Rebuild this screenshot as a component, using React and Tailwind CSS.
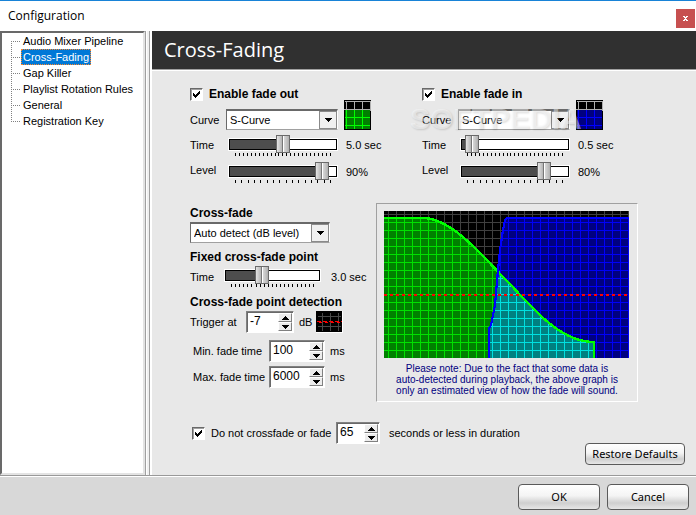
import { useId, useState } from "react";

const PAGES = [
  "Audio Mixer Pipeline",
  "Cross-Fading",
  "Gap Killer",
  "Playlist Rotation Rules",
  "General",
  "Registration Key",
];

const FADE_OUT = "M0 7 H41 C70 9 100 47 126 73 C156 106 180 131 210 131 V147";
const FADE_IN = "M105 147 V118 L107 114 L111 94 L114 59 L116 39 L119 19 L121 9 L123 7 H245";

const HEADING = "text-[12px] font-bold whitespace-nowrap";

function Check({ children, bold }) {
  const [on, setOn] = useState(true);
  return (
    <label className={`flex h-3 items-center gap-1.5 whitespace-nowrap ${bold ? HEADING : ""}`}>
      <span className="grid">
        <input
          type="checkbox"
          checked={on}
          onChange={() => setOn(!on)}
          className="[grid-area:1/1] size-[13px] appearance-none border border-[#696969] border-r-white border-b-white bg-white shadow-[inset_1px_1px_0_#a0a0a0]"
        />
        {on && (
          <svg className="pointer-events-none [grid-area:1/1] size-[13px]" viewBox="0 0 13 13" shapeRendering="crispEdges">
            <path d="M3 5h1v1h1v1h1v-1h1v-1h1v-1h1v-1h1v3h-1v1h-1v1h-1v1h-1v1h-1v-1h-1v-1h-1z" />
          </svg>
        )}
      </span>
      {children}
    </label>
  );
}

function Select({ id, label, options }) {
  return (
    <span className="grid w-full">
      <select
        id={id}
        aria-label={label}
        className="[grid-area:1/1] h-[21px] w-full appearance-none border border-t-2 border-[#696969] border-r-white border-b-[#a0a0a0] bg-white pl-[3px] outline-none"
      >
        {options.map((o) => (
          <option key={o}>{o}</option>
        ))}
      </select>
      <span className="pointer-events-none m-px mt-0.5 flex h-[18px] w-[18px] items-center justify-center self-start justify-self-end border border-[#8a8a8a] bg-[#f0f0f0] [grid-area:1/1]">
        <svg width="7" height="4" viewBox="0 0 7 4" shapeRendering="crispEdges">
          <path d="M0 0h7v1h-1v1h-1v1h-1v1h-1v-1h-1v-1h-1v-1h-1z" />
        </svg>
      </span>
    </span>
  );
}

function Slider({ id, initial, ticks }) {
  const [value, setValue] = useState(initial);
  return (
    <div className="w-full">
      <input
        id={id}
        type="range"
        value={value}
        onChange={(e) => setValue(Number(e.target.value))}
        style={{ "--fill": `${value}%` }}
        className="block h-[18px] w-full appearance-none bg-transparent [&::-webkit-slider-runnable-track]:h-[11px] [&::-webkit-slider-runnable-track]:border [&::-webkit-slider-runnable-track]:border-black [&::-webkit-slider-runnable-track]:bg-[linear-gradient(to_right,#4d4d4d_var(--fill),#fff_var(--fill))] [&::-webkit-slider-runnable-track]:shadow-[0_0_0_1px_#fff] [&::-webkit-slider-thumb]:-mt-[5px] [&::-webkit-slider-thumb]:h-[18px] [&::-webkit-slider-thumb]:w-[14px] [&::-webkit-slider-thumb]:appearance-none [&::-webkit-slider-thumb]:border [&::-webkit-slider-thumb]:border-[#6a6a6a] [&::-webkit-slider-thumb]:bg-[linear-gradient(to_right,#e4e4e4,#b4b4b4_5px,#777_5px,#777_6px,#fff_6px,#fff_7px,#d8d8d8_7px,#b0b0b0)]"
      />
      <div className="flex h-[3px] justify-between px-1.5">
        {Array.from({ length: ticks }, (_, i) => (
          <span key={i} className="w-px bg-black" />
        ))}
      </div>
    </div>
  );
}

function Spinner({ id, label, initial }) {
  const [value, setValue] = useState(initial);
  const button =
    "flex h-[9px] w-[14px] items-center justify-center border border-white border-r-[#808080] border-b-[#808080] bg-[#ececec]";
  return (
    <span className="flex h-[22px] w-full border border-[#808080] border-r-white border-b-white bg-white p-px shadow-[inset_1px_1px_0_#696969]">
      <input
        id={id}
        aria-label={label}
        value={value}
        onChange={(e) => setValue(e.target.value)}
        className="h-4 w-full min-w-0 bg-transparent pl-0.5 text-[12px] outline-none"
      />
      <span className="flex flex-col">
        <button type="button" aria-label="Increase" className={button} onClick={() => setValue(Number(value) + 1)}>
          <svg width="7" height="4" viewBox="0 0 7 4" shapeRendering="crispEdges">
            <path d="M3 0h1v1h1v1h1v1h1v1h-7v-1h1v-1h1v-1h1z" />
          </svg>
        </button>
        <button type="button" aria-label="Decrease" className={button} onClick={() => setValue(Number(value) - 1)}>
          <svg width="7" height="4" viewBox="0 0 7 4" shapeRendering="crispEdges">
            <path d="M0 0h7v1h-1v1h-1v1h-1v1h-1v-1h-1v-1h-1v-1h-1z" />
          </svg>
        </button>
      </span>
    </span>
  );
}

function CurveSwatch({ fill, line }) {
  return (
    <svg width="27" height="30" viewBox="0 0 27 30" shapeRendering="crispEdges" className="shrink-0">
      <rect width="27" height="30" />
      <path d="M2 0V10M10 0V10M18 0V10M26 0V10M0 1H27" transform="translate(.5 .5)" stroke="#b0b0b0" />
      <rect x="1" y="10" width="25" height="19" fill={fill} />
      <path d="M2.5 10V29M10.5 10V29M18.5 10V29M1 17.5H26M1 25.5H26" stroke={line} />
      <path d="M0 9.5H27" stroke="#b0b0b0" />
    </svg>
  );
}

function LevelSwatch() {
  return (
    <svg width="27" height="22" viewBox="0 0 27 22" shapeRendering="crispEdges" className="shrink-0">
      <rect width="27" height="22" fill="#fff" />
      <rect width="26" height="21" />
      <path d="M6.5 2V20M14.5 2V20M22.5 2V20M2 5.5H25M2 15.5H25" stroke="#484848" />
      <path d="M1 10.5H26" stroke="#f00" strokeDasharray="4 2" />
      <path d="M3 11.5H26" stroke="#f00" strokeDasharray="3 3" />
    </svg>
  );
}

function FadeGroup({ title, time, timeText, level, levelText, fill, line }) {
  const id = useId();
  return (
    <section className="w-[232px]">
      <Check bold>{title}</Check>
      <div className="flex h-[30px] items-end">
        <label htmlFor={`${id}c`} className="w-9 shrink-0 leading-5">Curve</label>
        <div className="w-[112px]">
          <Select id={`${id}c`} options={["S-Curve", "Linear", "Logarithmic"]} />
        </div>
        <div className="ml-1.5">
          <CurveSwatch fill={fill} line={line} />
        </div>
      </div>
      <div className="mt-[5px] flex">
        <label htmlFor={`${id}t`} className="w-[39px] shrink-0 leading-5">Time</label>
        <div className="w-[108px]">
          <Slider id={`${id}t`} initial={time} ticks={25} />
        </div>
        <span className="ml-[9px] leading-5">{timeText}</span>
      </div>
      <div className="mt-1.5 flex">
        <label htmlFor={`${id}l`} className="w-[39px] shrink-0 leading-4">Level</label>
        <div className="w-[108px]">
          <Slider id={`${id}l`} initial={level} ticks={16} />
        </div>
        <span className="ml-[9px] leading-5">{levelText}</span>
      </div>
    </section>
  );
}

function FadeGraph() {
  const grid = (id, bg, line) => (
    <pattern id={id} width="8" height="8" patternUnits="userSpaceOnUse">
      <rect width="8" height="8" fill={bg} />
      <path d="M4.5 0V8M0 3.5H8" stroke={line} />
    </pattern>
  );
  return (
    <svg viewBox="0 0 245 147" className="block h-[147px] w-[245px]" shapeRendering="crispEdges" role="img" aria-label="Cross-fade graph">
      <defs>
        {grid("gridBlack", "#000", "#404040")}
        {grid("gridGreen", "#008000", "#00e000")}
        {grid("gridBlue", "#000080", "#0000f8")}
        {grid("gridTeal", "#008080", "#00e0e0")}
        <clipPath id="fadeInArea">
          <path d={`${FADE_IN} V147 Z`} />
        </clipPath>
      </defs>
      <rect width="245" height="147" fill="url(#gridBlack)" />
      <path d={`${FADE_OUT} H0 Z`} fill="url(#gridGreen)" />
      <path d={`${FADE_IN} V147 Z`} fill="url(#gridBlue)" />
      <path d={`${FADE_OUT} H0 Z`} fill="url(#gridTeal)" clipPath="url(#fadeInArea)" />
      <path d={FADE_OUT} fill="none" stroke="#00ff00" strokeWidth="2.4" />
      <path d={FADE_IN} fill="none" stroke="#0000ff" strokeWidth="2.2" />
      <path d="M0 84H245" stroke="#ff0000" strokeWidth="2" strokeDasharray="3 3" />
    </svg>
  );
}

function PushButton({ children, className }) {
  return (
    <button
      type="button"
      className={`rounded-[4px] border border-[#5a5a5a] bg-[linear-gradient(#fff,#f4f4f4_45%,#cfcfcf_75%,#e6e6e6)] font-['Noto_Sans',sans-serif] text-[11px] leading-4 text-black ${className}`}
    >
      {children}
    </button>
  );
}

export default function App() {
  const [page, setPage] = useState("Cross-Fading");
  return (
    <div className="flex min-h-screen flex-col border-t border-[#1883d7] bg-white font-['Liberation_Sans',Arial,sans-serif] text-[11px] text-black">
      <header className="flex h-[30px] items-center justify-between pr-px pl-2">
        <h1 className="font-['Open_Sans',sans-serif] text-[12px]">Configuration</h1>
        <button type="button" aria-label="Close" className="mt-1 flex size-[19px] items-center justify-center bg-[#c75050]">
          <svg width="5" height="5" viewBox="0 0 5 5" shapeRendering="crispEdges" fill="#fff">
            <path d="M0 0h2v1h1v-1h2v1h-1v1h-1v1h1v1h1v1h-2v-1h-1v1h-2v-1h1v-1h1v-1h-1v-1h-1z" />
          </svg>
        </button>
      </header>

      <div className="flex flex-1">
        <nav className="w-[145px] shrink-0 border-2 border-[#696969] border-r-[#e3e3e3] border-b-[#e3e3e3] bg-white">
          <ul className="pl-[9px]">
            {PAGES.map((name, i) => (
              <li key={name} className="flex h-4 items-center">
                <svg width="10" height="16" shapeRendering="crispEdges" stroke="#808080" strokeDasharray="1 1">
                  <path d={i === 0 ? "M.5 8V16" : i === PAGES.length - 1 ? "M.5 0V8" : "M.5 0V16"} />
                  <path d="M0 8.5H10" />
                </svg>
                <button
                  type="button"
                  onClick={() => setPage(name)}
                  className={`h-4 px-0.5 leading-4 whitespace-nowrap ${
                    name === page ? "bg-[#0078d7] text-white outline-1 -outline-offset-1 outline-[#ff8728] outline-dotted" : ""
                  }`}
                >
                  {name}
                </button>
              </li>
            ))}
          </ul>
        </nav>
        <div className="w-[7px] shrink-0 border-x border-[#a0a0a0] border-r-white bg-[linear-gradient(to_right,#fff_1px,#f0f0f0_1px,#f0f0f0_3px,#a0a0a0_3px,#a0a0a0_4px,#fff_4px)]" />

        <main className="flex-1 bg-[#e8e8e8]">
          <h2 className="h-[40px] border-b border-white bg-[#303030] pl-3 font-['Open_Sans',sans-serif] text-[20px] leading-[38px] text-white shadow-[inset_0_-1px_0_#a0a0a0]">
            Cross-Fading
          </h2>
          <div className="pt-[17px] pl-[38px]">
            <div className="relative flex">
              <FadeGroup title="Enable fade out" time={50} timeText="5.0 sec" level={92} levelText="90%" fill="#008000" line="#00ff00" />
              <FadeGroup title="Enable fade in" time={3} timeText="0.5 sec" level={81} levelText="80%" fill="#000080" line="#0000ff" />
              <span
                aria-hidden="true"
                className="pointer-events-none absolute top-3.5 left-[220px] text-[30px] leading-[34px] font-bold text-white/45 [text-shadow:1px_1px_2px_#0002]"
              >
                SOFTPEDIA
              </span>
            </div>

            <div className="mt-5 flex items-start">
              <div className="w-[186px]">
                <h3 className={`h-[19px] leading-5 ${HEADING}`}>Cross-fade</h3>
                <div className="w-[140px]">
                  <Select label="Cross-fade" options={["Auto detect (dB level)", "Fixed point"]} />
                </div>
                <h3 className={`mt-[5px] h-[18px] leading-[18px] ${HEADING}`}>Fixed cross-fade point</h3>
                <div className="flex">
                  <label htmlFor="fixed" className="w-[35px] shrink-0 leading-[22px]">Time</label>
                  <div className="w-[95px]">
                    <Slider id="fixed" initial={37} ticks={21} />
                  </div>
                  <span className="ml-[11px] leading-[22px]">3.0 sec</span>
                </div>
                <h3 className={`mt-[5px] h-[18px] leading-[18px] ${HEADING}`}>Cross-fade point detection</h3>
                <div className="flex items-center">
                  <label htmlFor="trigger" className="w-14 shrink-0">Trigger at</label>
                  <div className="w-12">
                    <Spinner id="trigger" initial="-7" />
                  </div>
                  <span className="ml-[5px] w-[17px]">dB</span>
                  <LevelSwatch />
                </div>
                <div className="mt-[7px] flex items-center pl-[3px]">
                  <label htmlFor="min" className="w-[76px] shrink-0">Min. fade time</label>
                  <div className="w-14">
                    <Spinner id="min" initial="100" />
                  </div>
                  <span className="ml-[5px]">ms</span>
                </div>
                <div className="mt-1 flex items-center pl-[3px]">
                  <label htmlFor="max" className="w-[76px] shrink-0">Max. fade time</label>
                  <div className="w-14">
                    <Spinner id="max" initial="6000" />
                  </div>
                  <span className="ml-[5px]">ms</span>
                </div>
              </div>

              <figure className="w-[262px] border border-[#a0a0a0] border-r-white border-b-white p-[7px] pb-[5px]">
                <FadeGraph />
                <figcaption className="pt-[5px] text-center text-[10px] leading-[11px] text-[#000080]">
                  Please note: Due to the fact that some data is
                  <br />
                  auto-detected during playback, the above graph is
                  <br />
                  only an estimated view of how the fade will sound.
                </figcaption>
              </figure>
            </div>

            <div className="mt-5 flex items-center pl-0.5">
              <div className="w-[144px]">
                <Check>Do not crossfade or fade</Check>
              </div>
              <div className="w-11">
                <Spinner label="Seconds" initial="65" />
              </div>
              <span className="ml-[9px]">seconds or less in duration</span>
            </div>
          </div>
          <div className="-mt-px flex justify-end pr-[11px] pb-2.5">
            <PushButton className="h-[22px] w-[100px]">Restore Defaults</PushButton>
          </div>
        </main>
      </div>

      <footer className="flex h-[40px] items-start justify-end gap-[7px] border-t border-[#999] bg-[#d8d8d8] pt-2 pr-[7px] shadow-[inset_0_1px_0_#fff]">
        <PushButton className="h-[26px] w-[82px]">OK</PushButton>
        <PushButton className="h-[26px] w-[82px]">Cancel</PushButton>
      </footer>
    </div>
  );
}
